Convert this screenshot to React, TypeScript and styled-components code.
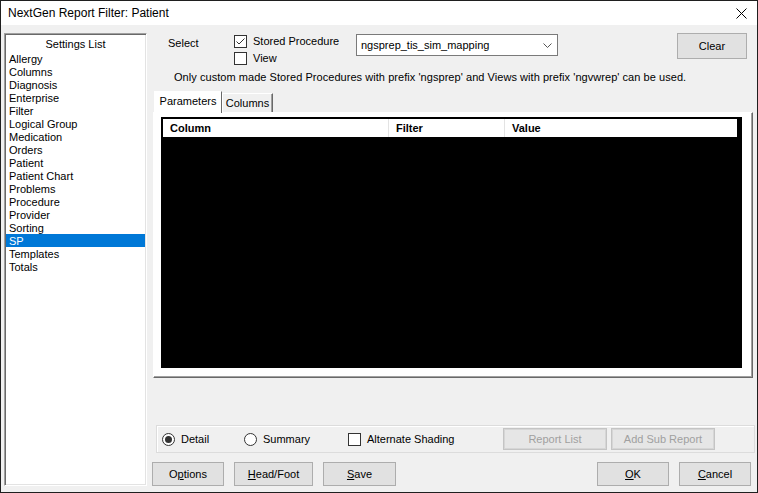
import React from 'react'
import styled, { createGlobalStyle } from 'styled-components'

const GlobalStyle = createGlobalStyle`
  html, body {
    margin: 0;
    padding: 0;
    background: #ffffff;
  }
  body {
    font-family: "Liberation Sans", Arial, sans-serif;
    font-size: 11px;
    color: #000000;
  }
  * {
    box-sizing: border-box;
  }
`

const StyledWindow = styled.div`
  width: 758px;
  height: 493px;
  border: 1px solid #1f1f1f;
  display: flex;
  flex-direction: column;
  background: #f0f0f0;
`

const StyledTitleBar = styled.div`
  height: 24px;
  background: #ffffff;
  display: flex;
  align-items: center;
  justify-content: space-between;
  padding-left: 7px;

  .title {
    font-size: 12px;
    line-height: 14px;
  }
`

const StyledClose = styled.div`
  width: 32px;
  height: 24px;
  display: flex;
  align-items: center;
  justify-content: center;
`

const StyledBody = styled.div`
  flex: 1;
  display: flex;
  padding: 8px 2px 6px 3px;
`

const StyledSidebar = styled.div`
  width: 143px;
  height: 453px;
  background: #ffffff;
  border: 1px solid;
  border-color: #a0a0a0 #ffffff #ffffff #a0a0a0;
  box-shadow: inset 1px 1px 0 #696969, inset -1px -1px 0 #e3e3e3;
  padding: 4px 1px 0 1px;

  .header {
    text-align: center;
    line-height: 13px;
    padding-bottom: 1px;
  }
`

const StyledListItem = styled.div<{ $selected?: boolean }>`
  line-height: 13px;
  height: 13px;
  padding-left: 3px;
  padding-top: 1px;
  background: ${props => (props.$selected ? '#0078d7' : 'transparent')};
  color: ${props => (props.$selected ? '#ffffff' : '#000000')};
`

const StyledMain = styled.div`
  flex: 1;
  margin-left: 3px;
  display: flex;
  flex-direction: column;
`

const StyledTopRow = styled.div`
  height: 35px;
  display: flex;
  align-items: flex-start;
`

const StyledSelectLabel = styled.div`
  width: 84px;
  padding-left: 18px;
  padding-top: 4px;
  line-height: 13px;
`

const StyledCheckStack = styled.div`
  width: 122px;
  display: flex;
  flex-direction: column;
  gap: 4px;
  padding-top: 2px;
`

const StyledCheckRow = styled.label`
  display: flex;
  align-items: center;
  gap: 6px;
  height: 13px;
  line-height: 13px;
`

const StyledBox = styled.span`
  width: 13px;
  height: 13px;
  border: 1px solid #333333;
  background: #ffffff;
  display: inline-flex;
  align-items: center;
  justify-content: center;
  flex-shrink: 0;
`

const StyledRadio = styled.span`
  width: 13px;
  height: 13px;
  border: 1px solid #333333;
  border-radius: 50%;
  background: #ffffff;
  display: inline-flex;
  align-items: center;
  justify-content: center;
  flex-shrink: 0;

  .dot {
    width: 7px;
    height: 7px;
    border-radius: 50%;
    background: #333333;
  }
`

const StyledDropdown = styled.div`
  margin-top: 1px;
  width: 202px;
  height: 22px;
  border: 1px solid #7a7a7a;
  background: #ffffff;
  display: flex;
  align-items: center;
  justify-content: space-between;
  padding: 0 5px 0 4px;
`

const StyledButton = styled.div<{ $width: number; $height?: number; $disabled?: boolean }>`
  width: ${props => props.$width}px;
  height: ${props => props.$height ?? 24}px;
  display: flex;
  align-items: center;
  justify-content: center;
  background: ${props => (props.$disabled ? '#e6e6e6' : '#e1e1e1')};
  border: 1px solid ${props => (props.$disabled ? '#c4c4c4' : '#adadad')};
  box-shadow: ${props => (props.$disabled ? 'inset 0 0 0 1px #d6d6d6' : 'none')};
  color: ${props => (props.$disabled ? '#a0a0a0' : '#000000')};
  flex-shrink: 0;

  u {
    text-decoration: underline;
    text-underline-offset: 1px;
  }
`

const StyledSpacer = styled.div`
  flex: 1;
`

const StyledInfo = styled.div`
  margin-top: 3px;
  padding-left: 24px;
  line-height: 13px;
  letter-spacing: 0.05px;
`

const StyledTabs = styled.div`
  margin-top: 7px;
  margin-left: 4px;
  height: 21px;
  display: flex;
  align-items: flex-end;
  position: relative;
  z-index: 1;
`

const StyledTab = styled.div<{ $active?: boolean; $width: number }>`
  width: ${props => props.$width}px;
  height: ${props => (props.$active ? 22 : 19)}px;
  margin-bottom: ${props => (props.$active ? -1 : 0)}px;
  background: ${props => (props.$active ? '#ffffff' : '#f0f0f0')};
  border: 1px solid;
  border-bottom: none;
  border-color: #ffffff #696969 transparent #ffffff;
  box-shadow: ${props => (props.$active ? 'none' : 'inset -1px 0 0 #a0a0a0')};
  display: flex;
  align-items: center;
  justify-content: center;
  padding-bottom: ${props => (props.$active ? 3 : 0)}px;
  line-height: 13px;
`

const StyledPanel = styled.div`
  margin-left: 3px;
  width: 600px;
  height: 266px;
  background: #ffffff;
  border: 1px solid;
  border-color: #ffffff #696969 #696969 #ffffff;
  box-shadow: inset -1px -1px 0 #a0a0a0;
  padding: 4px 10px 9px 7px;
  display: flex;
`

const StyledGrid = styled.div`
  flex: 1;
  background: #000000;
  padding: 2px;
`

const StyledGridHeader = styled.div`
  width: 574px;
  height: 18px;
  background: #ffffff;
  display: flex;
`

const StyledHeaderCell = styled.div<{ $width?: number }>`
  width: ${props => (props.$width ? `${props.$width}px` : 'auto')};
  flex: ${props => (props.$width ? '0 0 auto' : '1')};
  border-right: ${props => (props.$width ? '1px solid #e3e3e3' : 'none')};
  font-weight: bold;
  padding-left: 7px;
  display: flex;
  align-items: center;
`

const StyledOptionsBox = styled.div`
  margin-top: 47px;
  margin-left: 6px;
  width: 599px;
  height: 28px;
  border: 1px solid #dcdcdc;
  box-shadow: inset 1px 1px 0 #ffffff;
  display: flex;
  align-items: center;
  padding-left: 5px;
`

const StyledOption = styled.label<{ $width: number }>`
  width: ${props => props.$width}px;
  display: flex;
  align-items: center;
  gap: 6px;
  line-height: 13px;
`

const StyledOptionButtons = styled.div`
  display: flex;
  gap: 4px;
`

const StyledFooter = styled.div`
  margin-top: 9px;
  display: flex;
  padding: 0 4px 0 2px;
  gap: 10px;
`

const CheckIcon = () => (
  <svg width="11" height="11" viewBox="0 0 11 11">
    <polyline points="1.5,5.5 4,8 9.5,2.5" fill="none" stroke="#333" strokeWidth="1" />
  </svg>
)

const items = [
  'Allergy', 'Columns', 'Diagnosis', 'Enterprise', 'Filter', 'Logical Group', 'Medication',
  'Orders', 'Patient', 'Patient Chart', 'Problems', 'Procedure', 'Provider', 'Sorting', 'SP',
  'Templates', 'Totals',
]

const App = () => {
  return (
    <>
      <GlobalStyle />
      <StyledWindow>
        <StyledTitleBar>
          <span className="title">NextGen Report Filter: Patient</span>
          <StyledClose>
            <svg width="11" height="11" viewBox="0 0 11 11">
              <line x1="0.5" y1="0.5" x2="10.5" y2="10.5" stroke="#000" strokeWidth="1" />
              <line x1="10.5" y1="0.5" x2="0.5" y2="10.5" stroke="#000" strokeWidth="1" />
            </svg>
          </StyledClose>
        </StyledTitleBar>

        <StyledBody>
          <StyledSidebar>
            <div className="header">Settings List</div>
            {items.map(item => (
              <StyledListItem key={item} $selected={item === 'SP'}>{item}</StyledListItem>
            ))}
          </StyledSidebar>

          <StyledMain>
            <StyledTopRow>
              <StyledSelectLabel>Select</StyledSelectLabel>
              <StyledCheckStack>
                <StyledCheckRow>
                  <StyledBox><CheckIcon /></StyledBox>
                  Stored Procedure
                </StyledCheckRow>
                <StyledCheckRow>
                  <StyledBox />
                  View
                </StyledCheckRow>
              </StyledCheckStack>
              <StyledDropdown>
                <span>ngsprep_tis_sim_mapping</span>
                <svg width="9" height="5" viewBox="0 0 9 5">
                  <polyline points="0.5,0.5 4.5,4.5 8.5,0.5" fill="none" stroke="#555" strokeWidth="1" />
                </svg>
              </StyledDropdown>
              <StyledSpacer />
              <StyledButton $width={70} $height={26} style={{ marginRight: 8 }}>Clear</StyledButton>
            </StyledTopRow>

            <StyledInfo>
              Only custom made Stored Procedures with prefix 'ngsprep' and Views with prefix 'ngvwrep' can be used.
            </StyledInfo>

            <StyledTabs>
              <StyledTab $active $width={68}>Parameters</StyledTab>
              <StyledTab $width={51}>Columns</StyledTab>
            </StyledTabs>

            <StyledPanel>
              <StyledGrid>
                <StyledGridHeader>
                  <StyledHeaderCell $width={226}>Column</StyledHeaderCell>
                  <StyledHeaderCell $width={116}>Filter</StyledHeaderCell>
                  <StyledHeaderCell>Value</StyledHeaderCell>
                </StyledGridHeader>
              </StyledGrid>
            </StyledPanel>

            <StyledOptionsBox>
              <StyledOption $width={82}>
                <StyledRadio><span className="dot" /></StyledRadio>
                Detail
              </StyledOption>
              <StyledOption $width={104}>
                <StyledRadio />
                Summary
              </StyledOption>
              <StyledOption $width={155}>
                <StyledBox />
                Alternate Shading
              </StyledOption>
              <StyledOptionButtons>
                <StyledButton $width={104} $height={22} $disabled>Report List</StyledButton>
                <StyledButton $width={104} $height={22} $disabled>Add Sub Report</StyledButton>
              </StyledOptionButtons>
            </StyledOptionsBox>

            <StyledFooter>
              <StyledButton $width={72}><span>O<u>p</u>tions</span></StyledButton>
              <StyledButton $width={79}><span><u>H</u>ead/Foot</span></StyledButton>
              <StyledButton $width={73}><span><u>S</u>ave</span></StyledButton>
              <StyledSpacer />
              <StyledButton $width={72}><span><u>O</u>K</span></StyledButton>
              <StyledButton $width={72}><span><u>C</u>ancel</span></StyledButton>
            </StyledFooter>
          </StyledMain>
        </StyledBody>
      </StyledWindow>
    </>
  )
}

export default App
